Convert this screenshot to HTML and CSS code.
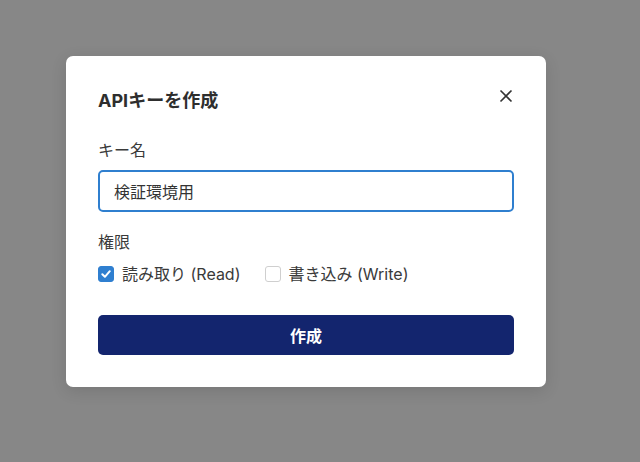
FILE: index.html
```html
<html>

<head>
  <meta charset="utf-8">
  <link rel="stylesheet" href="styles.css">
</head>

<body>
  <div class="overlay">
    <div class="dialog">
      <div class="dialog-header">
        <h2 class="dialog-title">APIキーを作成</h2>
        <button class="close-button" aria-label="閉じる">
          <svg width="14" height="14" viewBox="0 0 14 14">
            <path d="M1.5 1.5 L12.5 12.5 M12.5 1.5 L1.5 12.5" stroke="#333" stroke-width="1.6" fill="none" />
          </svg>
        </button>
      </div>

      <label class="field-label" for="keyName">キー名</label>
      <input id="keyName" class="text-input" type="text" value="検証環境用" />

      <div class="field-label perm-label">権限</div>
      <div class="checks">
        <label class="check">
          <span class="box checked">
            <svg width="12" height="12" viewBox="0 0 12 12">
              <path d="M2.3 6.2 L4.9 8.8 L9.8 3.2" stroke="#fff" stroke-width="2" fill="none" stroke-linecap="round" stroke-linejoin="round" />
            </svg>
          </span>
          読み取り (Read)
        </label>
        <label class="check">
          <span class="box"></span>
          書き込み (Write)
        </label>
      </div>

      <button class="submit-button">作成</button>
    </div>
  </div>
</body>

</html>
```

FILE: styles.css
```css
html,
body {
  margin: 0;
  height: 100%;
}

body {
  background-color: #878787;
  font-family: Inter, "Noto Sans CJK JP", sans-serif;
  color: #333333;
}

.overlay {
  padding: 56px 0 0 66px;
}

.dialog {
  width: 480px;
  box-sizing: border-box;
  padding: 32px;
  background-color: #ffffff;
  border-radius: 7px;
  box-shadow: 0 4px 16px rgba(0, 0, 0, 0.12);
}

.dialog-header {
  display: flex;
  justify-content: space-between;
  align-items: flex-start;
  margin-bottom: 25px;
}

.dialog-title {
  margin: 0;
  font-size: 18px;
  line-height: 26px;
  font-weight: 700;
  color: #2e2e2e;
}

.close-button {
  border: none;
  background: none;
  padding: 0;
  width: 14px;
  height: 14px;
  margin: 1px 1px 0 0;
  cursor: pointer;
  display: flex;
}

.field-label {
  display: block;
  font-size: 16px;
  line-height: 22px;
  color: #3a3a3a;
  margin-bottom: 9px;
}

.perm-label {
  margin-top: 19px;
  margin-bottom: 10px;
}

.text-input {
  display: block;
  width: 100%;
  height: 42px;
  box-sizing: border-box;
  border: 2px solid #2f7fcf;
  border-radius: 5px;
  padding: 0 14px;
  font-family: Inter, "Noto Sans CJK JP", sans-serif;
  font-size: 16px;
  color: #333333;
  outline: none;
}

.checks {
  display: flex;
  gap: 24px;
  font-size: 16px;
  line-height: 22px;
  color: #3a3a3a;
}

.check {
  display: flex;
  align-items: center;
  gap: 8px;
}

.box {
  width: 16px;
  height: 16px;
  box-sizing: border-box;
  border: 1.5px solid #cfcfcf;
  border-radius: 3px;
  display: flex;
  align-items: center;
  justify-content: center;
}

.box.checked {
  background-color: #2f7fd0;
  border-color: #2f7fd0;
}

.submit-button {
  display: block;
  width: 100%;
  height: 40px;
  margin-top: 30px;
  border: none;
  border-radius: 5px;
  background-color: #13256e;
  color: #ffffff;
  font-family: Inter, "Noto Sans CJK JP", sans-serif;
  font-size: 16px;
  font-weight: 700;
  cursor: pointer;
}
```
